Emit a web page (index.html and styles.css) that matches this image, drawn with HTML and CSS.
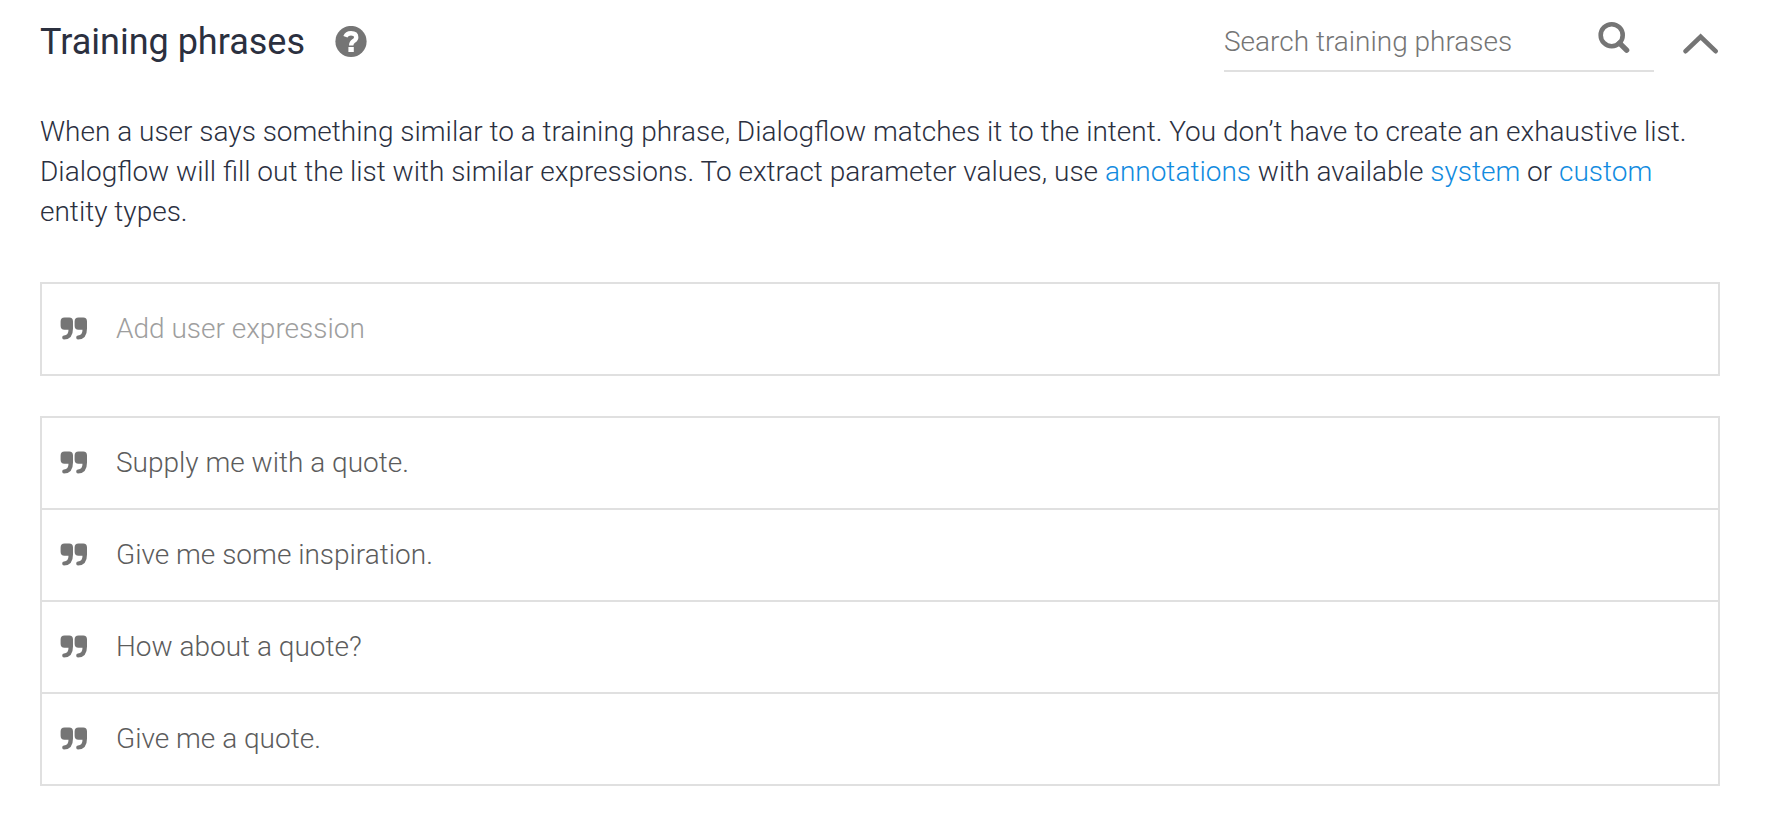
FILE: index.html
```html
<!DOCTYPE html>
<html lang="en">
<head>
<meta charset="utf-8">
<title>Training phrases</title>
<link rel="stylesheet" href="styles.css">
</head>
<body>
<svg class="sprite" aria-hidden="true">
  <symbol id="quote" viewBox="0 0 28 24">
    <path d="M4.5 .5H9.2Q13 .5 13 4.4V11.5Q13 22.5 4 22.5Q2.2 22.5 2.2 20.5T4 18.5Q8.5 18.3 8.5 12.7H4.5Q.6 12.7 .6 8.8V4.4Q.6 .5 4.5 .5Z"/>
    <path d="M18.5 .5H23.2Q27 .5 27 4.4V11.5Q27 22.5 18 22.5Q16.2 22.5 16.2 20.5T18 18.5Q22.5 18.3 22.5 12.7H18.5Q14.6 12.7 14.6 8.8V4.4Q14.6 .5 18.5 .5Z"/>
  </symbol>
</svg>
<main class="panel">
  <header class="header">
    <h1 class="title">Training phrases</h1>
    <button class="icon-button help" type="button" aria-label="Help">
      <svg width="32" height="32" viewBox="0 0 32 32">
        <circle cx="16" cy="15.5" r="15.6" fill="#757575"/>
        <path d="M10.4 10.8Q11.8 7.2 16 7.2Q21.2 7.2 21.2 11.2Q21.2 13.4 18.8 14.8Q16.2 16.4 16.2 19.4" fill="none" stroke="#fff" stroke-width="4.4"/>
        <path d="M13.4 21H18.8V26H13.4Z" fill="#fff"/>
      </svg>
    </button>
    <form class="search" role="search">
      <input class="search-input" type="text" placeholder="Search training phrases" aria-label="Search training phrases">
      <button class="icon-button search-button" type="button" aria-label="Search">
        <svg width="34" height="34" viewBox="0 0 34 34" fill="none" stroke="#757575">
          <circle cx="14.7" cy="15.2" r="11" stroke-width="4.6"/>
          <path d="M22.5 23.2L29.6 30.2" stroke-width="5.4" stroke-linecap="round"/>
        </svg>
      </button>
    </form>
    <button class="icon-button collapse" type="button" aria-label="Collapse">
      <svg width="38" height="24" viewBox="0 0 38 24" fill="none" stroke="#757575" stroke-width="4.6" stroke-linecap="round">
        <path d="M4.6 21.2L19.6 6.8L34.6 21.2"/>
      </svg>
    </button>
  </header>
  <p class="description">When a user says something similar to a training phrase, Dialogflow matches it to the intent. You don’t have to create an exhaustive list. Dialogflow will fill out the list with similar expressions. To extract parameter values, use <a class="link" href="#annotations">annotations</a> with available <a class="link" href="#system">system</a> or <a class="link" href="#custom">custom</a> entity types.</p>
  <div class="box row">
    <svg class="quote"><use href="#quote"/></svg>
    <input class="expression-input" type="text" placeholder="Add user expression" aria-label="Add user expression">
  </div>
  <ul class="box list">
    <li class="row"><svg class="quote"><use href="#quote"/></svg><span>Supply me with a quote.</span></li>
    <li class="row"><svg class="quote"><use href="#quote"/></svg><span>Give me some inspiration.</span></li>
    <li class="row"><svg class="quote"><use href="#quote"/></svg><span>How about a quote?</span></li>
    <li class="row"><svg class="quote"><use href="#quote"/></svg><span>Give me a quote.</span></li>
  </ul>
</main>
</body>
</html>
```
FILE: styles.css
```css
* {
  box-sizing: border-box;
}

body {
  margin: 0;
  background: #fff;
  color: #2b303f;
  font: 300 28px/40px Roboto, sans-serif;
}

input {
  min-width: 0;
  padding: 0;
  border: 0;
  outline: 0;
  background: transparent;
  color: #5c5c5c;
  font: inherit;
}

.sprite {
  position: absolute;
  width: 0;
  height: 0;
}

.panel {
  padding: 12px 54px 36px 40px;
}

.header {
  display: flex;
  align-items: center;
  height: 60px;
}

.title {
  margin: 0;
  font-size: 36px;
  font-weight: 400;
}

.icon-button {
  display: flex;
  padding: 0;
  border: 0;
  background: none;
  cursor: pointer;
}

.help {
  margin-left: 30px;
}

.search {
  display: flex;
  align-items: center;
  flex: 0 1 430px;
  height: 60px;
  margin-left: auto;
  padding-right: 23px;
  border-bottom: 2px solid #e0e0e0;
}

.search-input {
  flex: 1;
  padding-top: 2px;
}

.search-input::placeholder {
  color: #757575;
  opacity: 1;
}

.search-button {
  align-self: flex-start;
  margin-top: 8px;
}

.collapse {
  margin: 0 1px 0 27px;
}

.description {
  margin: 40px 0 50px;
}

.link {
  color: #128be0;
  text-decoration: none;
}

.box {
  margin: 0 0 40px;
  border: 2px solid #e0e0e0;
}

.row {
  display: flex;
  align-items: center;
  gap: 28px;
  padding: 25px 18px;
}

.list {
  padding: 0;
  color: #5c5c5c;
  list-style: none;
}

.list .row + .row {
  border-top: 2px solid #e0e0e0;
}

.quote {
  width: 28px;
  height: 24px;
  fill: #757575;
}

.expression-input {
  flex: 1;
  height: 40px;
}

.expression-input::placeholder {
  color: #9e9e9e;
  opacity: 1;
}
```
